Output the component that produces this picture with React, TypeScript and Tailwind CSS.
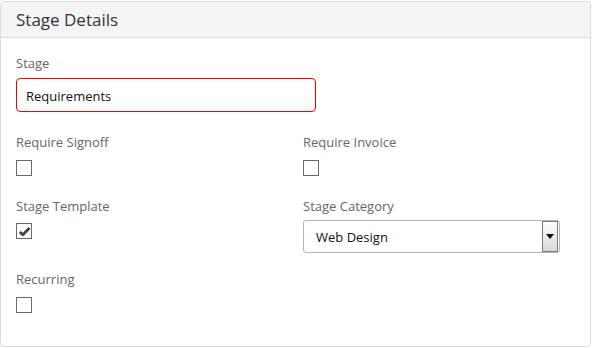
import React from "react";

function Box({ checked }: { checked?: boolean }) {
  return (
    <div className="w-4 h-4 border-[1.5px] border-[#6b6b6b] bg-white flex items-center justify-center">
      {checked && (
        <svg width="13" height="11" viewBox="0 0 13 11">
          <path d="M1.8 6 L4.8 8.8 L11.5 2" fill="none" stroke="#444" strokeWidth="2.8" strokeLinejoin="round" />
        </svg>
      )}
    </div>
  );
}

function Label({ children }: { children: React.ReactNode }) {
  return <div className="text-[13px] leading-[18px] text-[#666]">{children}</div>;
}

export default function App() {
  return (
    <div className="w-[593px] h-[348px] bg-white pt-px" style={{ fontFamily: '"Open Sans", "Noto Sans", sans-serif' }}>
      <div className="w-[591px] h-[346px] border border-[#dcdcdc] rounded-[4px] overflow-hidden">
        <div className="h-[36px] bg-[#f4f4f4] border-b border-[#dcdcdc] px-[15px] flex items-center">
          <span className="text-[17px] text-[#333]">Stage Details</span>
        </div>
        <div className="px-[15px] pt-[16px]">
          <Label>Stage</Label>
          <div className="mt-[6px] w-[300px] h-[34px] border border-[#ee0000] rounded-[4px] flex items-center px-[9px] pt-[3px] text-[13px] text-[#111]">
            Requirements
          </div>
          <div className="grid grid-cols-[287px_1fr] mt-[21px]">
            <div>
              <Label>Require Signoff</Label>
              <div className="mt-[9px]"><Box /></div>
            </div>
            <div>
              <Label>Require Invoice</Label>
              <div className="mt-[9px]"><Box /></div>
            </div>
          </div>
          <div className="grid grid-cols-[287px_1fr] mt-[21px]">
            <div>
              <Label>Stage Template</Label>
              <div className="mt-[8px]"><Box checked /></div>
            </div>
            <div>
              <Label>Stage Category</Label>
              <div className="mt-[5px] w-[257px] h-[33px] border border-[#b5b5b5] rounded-[3px] flex items-center justify-between pl-[12px] pr-px">
                <span className="text-[13px] text-[#111] pt-[2px]">Web Design</span>
                <div className="w-[16px] h-[31px] border border-[#7a7a7a] bg-gradient-to-b from-white to-[#d8d8d8] flex items-center justify-center">
                  <svg width="8" height="5" viewBox="0 0 8 5"><path d="M0 0 H8 L4 5 Z" fill="#111" /></svg>
                </div>
              </div>
            </div>
          </div>
          <div className="mt-[17px]">
            <Label>Recurring</Label>
            <div className="mt-[9px]"><Box /></div>
          </div>
        </div>
      </div>
    </div>
  );
}
